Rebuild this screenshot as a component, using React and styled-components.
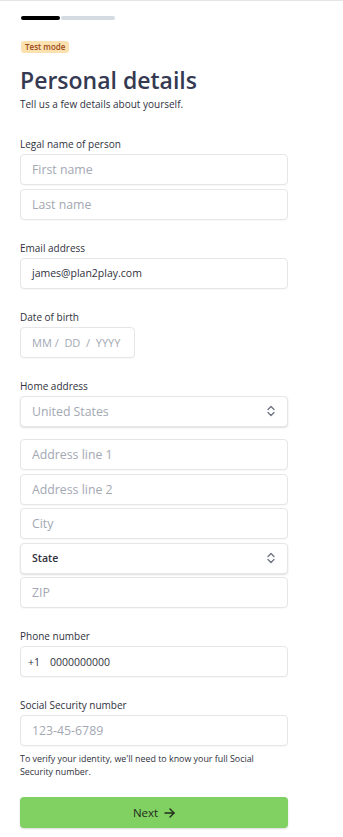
import styled, { createGlobalStyle } from "styled-components";

const GlobalStyle = createGlobalStyle`
  body {
    margin: 0;
    background: #fff;
    font-family: "Open Sans", "Noto Sans", sans-serif;
    color: #30313d;
  }
`;

const Page = styled.div`
  border-top: 1px solid #e6e6e6;
  padding: 15px 55px 8px 20px;
  box-sizing: border-box;
  width: 343px;
`;

const Progress = styled.div`
  display: flex;
  gap: 1px;
  margin-left: 1px;
`;

const Step = styled.div`
  width: ${(p) => (p.done ? "39px" : "54px")};
  height: 4px;
  border-radius: 2px;
  background: ${(p) => (p.done ? "#000" : "#d5dbe3")};
`;

const Badge = styled.span`
  display: inline-block;
  margin-top: 21px;
  margin-left: 1px;
  padding: 0 4px;
  height: 12px;
  line-height: 12px;
  border-radius: 3px;
  background: #fbe1b0;
  color: #9a4a16;
  font-size: 8px;
  font-weight: 600;
`;

const Title = styled.h1`
  margin: 10px 0 0;
  font-size: 23px;
  font-weight: 600;
  color: #353a52;
  line-height: 30px;
`;

const Subtitle = styled.p`
  margin: 2px 0 0;
  font-size: 10px;
  color: #30313d;
  line-height: 14px;
`;

const Section = styled.div`
  margin-top: ${(p) => p.top || 22}px;
  display: flex;
  flex-direction: column;
`;

const Label = styled.div`
  font-size: 10px;
  font-weight: 500;
  color: #30313d;
  line-height: 13px;
  margin-bottom: 3px;
`;

const Field = styled.div`
  display: flex;
  align-items: center;
  box-sizing: border-box;
  width: ${(p) => p.w || "268px"};
  height: 31px;
  margin-top: ${(p) => p.gap || 0}px;
  padding: 0 11px;
  border: 1px solid #e6e6e6;
  border-radius: 4px;
  background: #fff;
  box-shadow: ${(p) =>
    p.select ? "0 1px 2px rgba(0,0,0,0.13)" : "0 1px 1px rgba(0,0,0,0.03)"};
  font-size: ${(p) => (p.filled ? "10.5px" : "12.3px")};
  color: ${(p) => (p.filled ? "#30313d" : "#a3a8b3")};
  font-weight: ${(p) => (p.strong ? 600 : 400)};
  white-space: pre;
`;

const Grow = styled.span`
  flex: 1;
`;

const Prefix = styled.span`
  margin-left: -4px;
  margin-right: 10px;
`;

const Help = styled.p`
  margin: 5.5px 0 0;
  font-size: 8.9px;
  line-height: 13px;
  color: #30313d;
  width: 260px;
`;

const Button = styled.button`
  margin-top: 19.5px;
  width: 268px;
  height: 31px;
  border: none;
  border-radius: 4px;
  background: #80d062;
  box-shadow: 0 1px 2px rgba(0,0,0,0.15);
  display: flex;
  align-items: center;
  justify-content: center;
  gap: 6px;
  font-family: inherit;
  font-size: 11.5px;
  color: #1f2a1a;
  padding: 0;
`;

function Chevrons() {
  return (
    <svg width="10" height="12" viewBox="0 0 10 12" fill="none" stroke="#6d7280" strokeWidth="1.3" strokeLinecap="round" strokeLinejoin="round">
      <path d="M2 4.5 L5 1.5 L8 4.5" />
      <path d="M2 7.5 L5 10.5 L8 7.5" />
    </svg>
  );
}

function Arrow() {
  return (
    <svg width="11" height="10" viewBox="0 0 11 10" fill="none" stroke="#1f2a1a" strokeWidth="1.4" strokeLinecap="round" strokeLinejoin="round">
      <path d="M1 5 H10" />
      <path d="M6 1 L10 5 L6 9" />
    </svg>
  );
}

export default function App() {
  return (
    <>
      <GlobalStyle />
      <Page>
        <Progress>
          <Step done />
          <Step />
        </Progress>
        <Badge>Test mode</Badge>
        <Title>Personal details</Title>
        <Subtitle>Tell us a few details about yourself.</Subtitle>

        <Section top={27}>
          <Label>Legal name of person</Label>
          <Field>First name</Field>
          <Field gap={3.5}>Last name</Field>
        </Section>

        <Section>
          <Label>Email address</Label>
          <Field filled>james@plan2play.com</Field>
        </Section>

        <Section>
          <Label>Date of birth</Label>
          <Field w="115px" style={{ fontSize: "11px" }}>{"MM /  DD  /  YYYY"}</Field>
        </Section>

        <Section>
          <Label>Home address</Label>
          <Field select>
            <Grow>United States</Grow>
            <Chevrons />
          </Field>
          <Field gap={12.5}>Address line 1</Field>
          <Field gap={3.5}>Address line 2</Field>
          <Field gap={3.5}>City</Field>
          <Field gap={3.5} select filled strong>
            <Grow>State</Grow>
            <Chevrons />
          </Field>
          <Field gap={3.5}>ZIP</Field>
        </Section>

        <Section>
          <Label>Phone number</Label>
          <Field filled>
            <Prefix>+1</Prefix>0000000000
          </Field>
        </Section>

        <Section>
          <Label>Social Security number</Label>
          <Field>123-45-6789</Field>
          <Help>
            To verify your identity, we'll need to know your full Social
            Security number.
          </Help>
        </Section>

        <Button>
          Next <Arrow />
        </Button>
      </Page>
    </>
  );
}
